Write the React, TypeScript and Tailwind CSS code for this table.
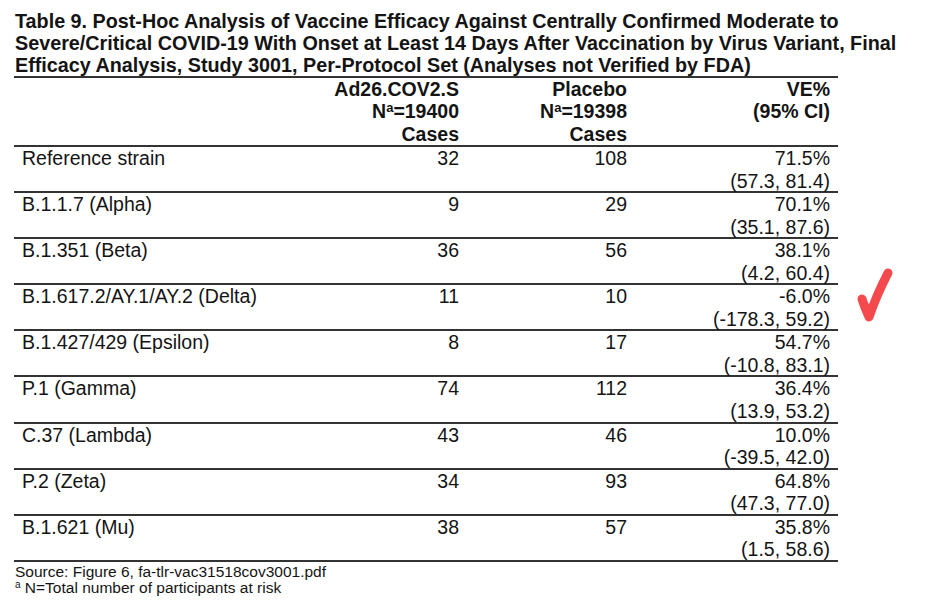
const rows: [string, string, string, string, string][] = [
  ["Reference strain", "32", "108", "71.5%", "(57.3, 81.4)"],
  ["B.1.1.7 (Alpha)", "9", "29", "70.1%", "(35.1, 87.6)"],
  ["B.1.351 (Beta)", "36", "56", "38.1%", "(4.2, 60.4)"],
  ["B.1.617.2/AY.1/AY.2 (Delta)", "11", "10", "-6.0%", "(-178.3, 59.2)"],
  ["B.1.427/429 (Epsilon)", "8", "17", "54.7%", "(-10.8, 83.1)"],
  ["P.1 (Gamma)", "74", "112", "36.4%", "(13.9, 53.2)"],
  ["C.37 (Lambda)", "43", "46", "10.0%", "(-39.5, 42.0)"],
  ["P.2 (Zeta)", "34", "93", "64.8%", "(47.3, 77.0)"],
  ["B.1.621 (Mu)", "38", "57", "35.8%", "(1.5, 58.6)"],
];

const cols = "grid grid-cols-[280px_173px_168px_203px]";

export default function App() {
  return (
    <div className="relative h-[609px] w-[928px] overflow-hidden bg-white px-[14px] font-['Liberation_Sans',Arial,sans-serif] text-[#141414]">
      <h1 className="whitespace-nowrap pl-[1px] pt-[9.5px] text-[19.75px] font-bold leading-[22px]">
        Table 9. Post-Hoc Analysis of Vaccine Efficacy Against Centrally Confirmed Moderate to
        <br />
        Severe/Critical COVID-19 With Onset at Least 14 Days After Vaccination by Virus Variant, Final
        <br />
        Efficacy Analysis, Study 3001, Per-Protocol Set (Analyses not Verified by FDA)
      </h1>

      <div className="w-[824px] text-[19.5px] leading-[22.5px]">
        <div className={`${cols} border-y-2 border-[#333] font-bold`}>
          <div />
          <div className="px-2 text-right">
            Ad26.COV2.S
            <br />
            N<sup className="text-[13px]">a</sup>=19400
            <br />
            Cases
          </div>
          <div className="px-2 text-right">
            Placebo
            <br />
            N<sup className="text-[13px]">a</sup>=19398
            <br />
            Cases
          </div>
          <div className="px-2 text-right">
            VE%
            <br />
            (95% CI)
          </div>
        </div>

        {rows.map(([label, vac, pla, ve, ci]) => (
          <div key={label} className={`${cols} h-[46.1px] border-b-2 border-[#333]`}>
            <div className="whitespace-nowrap px-2">{label}</div>
            <div className="px-2 text-right">{vac}</div>
            <div className="px-2 text-right">{pla}</div>
            <div className="px-2 text-right">
              {ve}
              <br />
              {ci}
            </div>
          </div>
        ))}
      </div>

      <div className="mt-[2px] pl-[1px] text-[15.5px] leading-[16px]">
        <p>Source: Figure 6, fa-tlr-vac31518cov3001.pdf</p>
        <p>
          <sup className="text-[10px]">a</sup> N=Total number of participants at risk
        </p>
      </div>

      {/* hand-drawn check mark */}
      <svg className="absolute left-[850px] top-[262px] h-[70px] w-[50px]" viewBox="850 262 50 70">
        <path
          d="M862 299 Q865 308 869 317 Q877 294 888 273"
          fill="none"
          stroke="#f4494d"
          strokeWidth={9}
          strokeLinecap="round"
          strokeLinejoin="round"
        />
      </svg>
    </div>
  );
}
